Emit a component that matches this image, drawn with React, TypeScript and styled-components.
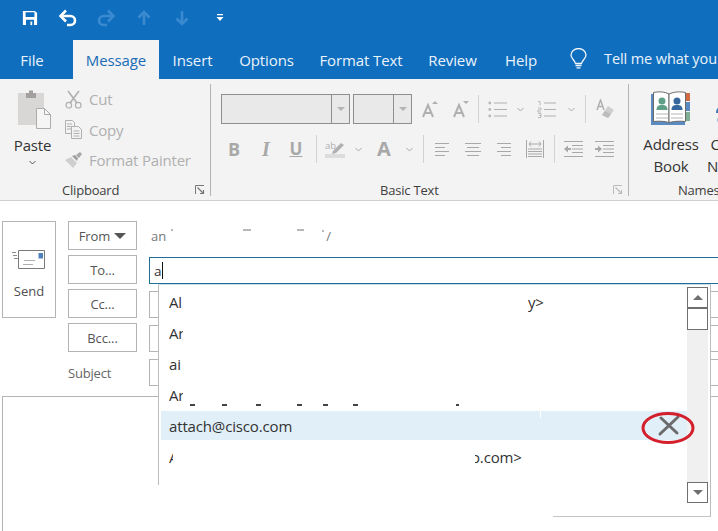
import React from "react";
import styled, { createGlobalStyle } from "styled-components";

const Global = createGlobalStyle`
  html, body { margin: 0; padding: 0; background: #fff; }
  body { font-family: "Open Sans", "Noto Sans", sans-serif; }
`;

const Win = styled.div`
  position: relative;
  width: 718px;
  height: 531px;
  overflow: hidden;
  background: #fff;
  font-size: 14px;
`;

const QuickBar = styled.div`
  display: flex;
  align-items: center;
  height: 36px;
  padding: 0 0 4px 11px;
  background: #106ebe;
`;

const QuickBtn = styled.div`
  display: flex;
  align-items: center;
  justify-content: center;
  width: 38px;
  height: 36px;
`;

const TabBar = styled.div`
  display: flex;
  height: 39px;
  background: #106ebe;
  color: #fff;
  white-space: nowrap;
  overflow: hidden;
`;

const Tab = styled.div<{ $w: number; $ml?: number; $active?: boolean }>`
  display: flex;
  align-items: center;
  justify-content: center;
  flex: none;
  width: ${(p) => p.$w}px;
  margin-left: ${(p) => p.$ml || 0}px;
  box-sizing: border-box;
  font-size: 15px;
  letter-spacing: -0.1px;
  background: ${(p) => (p.$active ? "#f3f3f3" : "transparent")};
  color: ${(p) => (p.$active ? "#1a6cb6" : "#eaf3fb")};
`;

const TellMe = styled.div`
  display: flex;
  align-items: center;
  margin-left: 18px;
  gap: 17px;
  padding-bottom: 2px;
  font-size: 14.5px;
  color: #eaf3fb;
  letter-spacing: -0.1px;
`;

const Ribbon = styled.div`
  display: flex;
  height: 121px;
  background: #f3f3f3;
  border-bottom: 1px solid #d0d0d0;
  color: #333;
  white-space: nowrap;
`;

const Group = styled.div<{ $w: number }>`
  display: flex;
  flex-direction: column;
  flex: none;
  width: ${(p) => p.$w}px;
`;

const GroupBody = styled.div`
  display: flex;
  flex: 1;
`;

const GroupDivider = styled.div`
  flex: none;
  width: 1px;
  margin: 5px 0 4px;
  background: #b4b4b4;
`;

const GroupLabel = styled.div<{ $pl: number }>`
  display: flex;
  align-items: center;
  justify-content: space-between;
  height: 20px;
  padding: 0 5px 0 ${(p) => p.$pl}px;
  font-size: 13px;
  letter-spacing: -0.2px;
  color: #404040;
`;

const Launcher = styled.svg`
  display: block;
  width: 10px;
  height: 10px;
`;

const PasteCol = styled.div`
  display: flex;
  flex-direction: column;
  align-items: center;
  width: 65px;
  padding-top: 11px;
  box-sizing: border-box;
`;

const PasteArt = styled.svg`
  flex: none;
  margin-left: 5px;
`;

const BigLabel = styled.div`
  margin-top: 6px;
  font-size: 15px;
  line-height: 20px;
  letter-spacing: -0.2px;
  text-align: center;
  color: #333;
`;

const PasteChevron = styled.div`
  display: flex;
  margin-top: 5px;
`;

const SmallCol = styled.div`
  display: flex;
  flex-direction: column;
  padding-top: 5px;
`;

const SmallRow = styled.div`
  display: flex;
  align-items: center;
  height: 30.5px;
  font-size: 15px;
  color: #b0b0b0;
  letter-spacing: -0.2px;
`;

const SmallIcon = styled.div`
  display: flex;
  width: 24px;
`;

const BasicBody = styled.div`
  display: flex;
  flex-direction: column;
  flex: 1;
  padding: 15px 0 0 10px;
`;

const ToolRow = styled.div<{ $h: number; $mt?: number }>`
  display: flex;
  align-items: center;
  height: ${(p) => p.$h}px;
  margin-top: ${(p) => p.$mt || 0}px;
  color: #a8a8a8;
`;

const Combo = styled.div<{ $w: number; $ml?: number }>`
  display: flex;
  justify-content: flex-end;
  width: ${(p) => p.$w}px;
  height: 30px;
  margin-left: ${(p) => p.$ml || 0}px;
  box-sizing: border-box;
  border: 1px solid #8e8e8e;
  background: #e9e9e9;
`;

const ComboArrow = styled.div`
  display: flex;
  align-items: center;
  justify-content: center;
  width: 17px;
  border-left: 1px solid #8e8e8e;
  &::after {
    content: "";
    border-left: 4px solid transparent;
    border-right: 4px solid transparent;
    border-top: 4px solid #b4b4b4;
  }
`;

const Slot = styled.div<{ $w: number }>`
  display: flex;
  align-items: center;
  justify-content: center;
  flex: none;
  width: ${(p) => p.$w}px;
`;

const Letter = styled.span<{ $serif?: boolean; $under?: boolean; $size?: number }>`
  font-family: ${(p) => (p.$serif ? '"Liberation Serif", serif' : '"Open Sans", sans-serif')};
  font-size: ${(p) => p.$size || 18}px;
  line-height: 22px;
  font-weight: 700;
  font-style: ${(p) => (p.$serif ? "italic" : "normal")};
  text-decoration: ${(p) => (p.$under ? "underline" : "none")};
  color: #a8a8a8;
`;

const ToolSep = styled.div<{ $ml: number }>`
  flex: none;
  width: 1px;
  height: 28px;
  margin-left: ${(p) => p.$ml}px;
  background: #d2d2d2;
`;

const NamesBody = styled.div`
  display: flex;
  padding-left: 2px;
`;

const NameCol = styled.div<{ $w: number }>`
  display: flex;
  flex-direction: column;
  align-items: center;
  flex: none;
  width: ${(p) => p.$w}px;
  padding-top: 12px;
`;

const NameIcon = styled.div`
  height: 34px;
  margin-bottom: 8px;
`;

const NameLabel = styled(BigLabel)`
  margin-top: 0;
  line-height: 22px;
`;

const Compose = styled.div`
  display: flex;
  padding: 20px 0 0 2px;
`;

const SendButton = styled.div`
  display: flex;
  flex-direction: column;
  align-items: center;
  flex: none;
  width: 54px;
  height: 97px;
  padding-top: 27px;
  box-sizing: border-box;
  border: 1px solid #b4b4b4;
  color: #505050;
  font-size: 13px;
`;

const SendLabel = styled.div`
  margin-top: 13px;
`;

const Fields = styled.div`
  display: flex;
  flex-direction: column;
  flex: 1;
  gap: 5px;
  margin-left: 12px;
`;

const FieldRow = styled.div`
  display: flex;
  align-items: flex-end;
  height: 29px;
`;

const FieldButton = styled.div`
  display: flex;
  align-items: center;
  justify-content: center;
  gap: 4px;
  flex: none;
  width: 69px;
  height: 29px;
  box-sizing: border-box;
  border: 1px solid #b4b4b4;
  font-size: 13px;
  letter-spacing: -0.1px;
  color: #555;
`;

const Caret = styled.span`
  border-left: 6px solid transparent;
  border-right: 6px solid transparent;
  border-top: 6px solid #555;
`;

const SubjectLabel = styled.div`
  display: flex;
  align-items: center;
  flex: none;
  width: 69px;
  height: 26px;
  font-size: 13px;
  letter-spacing: -0.2px;
  color: #666;
`;

const FieldInput = styled.div<{ $focus?: boolean }>`
  display: flex;
  align-items: center;
  flex: 1;
  height: 27px;
  margin-left: 12px;
  padding-left: 4px;
  box-sizing: border-box;
  border: 1px solid ${(p) => (p.$focus ? "#1d6f96" : "#b4b4b4")};
  border-right: none;
  font-size: 13.5px;
  color: #333;
`;

const TextCaret = styled.span`
  width: 1px;
  height: 17px;
  background: #111;
`;

const FromValue = styled.div`
  display: flex;
  align-items: center;
  height: 29px;
  margin-left: 14px;
  font-size: 13px;
  color: #777;
`;

const FromSlash = styled.span`
  margin-left: 2px;
`;

const Speck = styled.span<{ $ml: number; $w?: number; $up?: number; $color?: string }>`
  flex: none;
  width: ${(p) => p.$w || 3}px;
  height: 2px;
  margin-left: ${(p) => p.$ml}px;
  margin-bottom: ${(p) => p.$up || 0}px;
  background: ${(p) => p.$color || "#b8b8b8"};
`;

const Body = styled.div`
  height: 140px;
  margin: 10px 0 0 2px;
  border: 1px solid #b4b4b4;
  border-right: none;
`;

const Dropdown = styled.div`
  position: absolute;
  left: 158px;
  top: 284px;
  display: flex;
  width: 553px;
  height: 233px;
  box-sizing: border-box;
  border-top: 1px solid #c9dbe8;
  border-right: 1px solid #bdbdbd;
  background: #fff;
  &::before {
    content: "";
    position: absolute;
    left: 0;
    top: 0;
    width: 1px;
    height: 200px;
    background: #bdbdbd;
  }
  &::after {
    content: "";
    position: absolute;
    left: 395px;
    right: 0;
    bottom: 0;
    height: 1px;
    background: #c4c4c4;
  }
`;

const Rows = styled.div`
  display: flex;
  flex-direction: column;
  gap: 2px;
  flex: 1;
  padding: 2px 0 0 3px;
`;

const Row = styled.div<{ $hot?: boolean }>`
  position: relative;
  display: flex;
  align-items: center;
  height: 29px;
  padding: 1px 0 0 8px;
  box-sizing: border-box;
  font-size: 15px;
  letter-spacing: -0.15px;
  color: #333;
  white-space: nowrap;
  background: ${(p) => (p.$hot ? "#e1eff8" : "transparent")};
`;

const Name = styled.span<{ $w?: number }>`
  flex: none;
  overflow: hidden;
  width: ${(p) => (p.$w ? `${p.$w}px` : "auto")};
`;

const Tail = styled.span<{ $ml: number; $cut?: number }>`
  flex: none;
  overflow: hidden;
  margin-left: ${(p) => p.$ml}px;
  text-indent: ${(p) => -(p.$cut || 0)}px;
`;

const Notch = styled.span`
  position: absolute;
  left: 379px;
  top: 0;
  width: 1px;
  height: 7px;
  background: #fff;
`;

const RedRing = styled.svg`
  position: absolute;
  left: 480px;
  top: 0;
  width: 54px;
  height: 34px;
`;

const Scrollbar = styled.div`
  display: flex;
  flex-direction: column;
  flex: none;
  width: 21px;
  margin: 2px 2px 14px 0;
  background: #f0f0f0;
`;

const ScrollBtn = styled.div<{ $down?: boolean }>`
  display: flex;
  align-items: center;
  justify-content: center;
  height: 21px;
  margin-top: ${(p) => (p.$down ? "auto" : "0")};
  box-sizing: border-box;
  border: 1px solid #6f6f6f;
  background: #fff;
  &::after {
    content: "";
    border-left: 5px solid transparent;
    border-right: 5px solid transparent;
    ${(p) =>
      p.$down ? "border-top: 5px solid #6f6f6f;" : "border-bottom: 5px solid #6f6f6f;"}
  }
`;

const Thumb = styled.div`
  height: 22px;
  box-sizing: border-box;
  border: 1px solid #6f6f6f;
  background: #fff;
`;

const SaveIcon = () => (
  <svg width="16" height="16" viewBox="0 0 18 18">
    <path fill="#fff" d="M1 1h13.5L17 3.5V17H1z" />
    <path fill="#106ebe" d="M4 2.5h10v5.5H4zM4.5 11h9v6h-9z" />
    <path fill="#fff" d="M9.5 13h2v4h-2z" />
  </svg>
);

const UndoIcon = ({ color }: { color: string }) => (
  <svg width="20" height="18" viewBox="0 0 20 18" fill="none" stroke={color} strokeWidth="2.6">
    <path d="M3 7h9.5a4.3 4.3 0 0 1 0 9H9" />
    <path d="M8 1.5 2.5 7 8 12.5" />
  </svg>
);

const RedoIcon = () => (
  <svg width="20" height="18" viewBox="0 0 20 18" fill="none" stroke="#3a8ad0" strokeWidth="2.6">
    <path d="M17 7H7.5a4.3 4.3 0 0 0 0 9H11" />
    <path d="M12 1.5 17.5 7 12 12.5" />
  </svg>
);

const ArrowIcon = ({ down }: { down?: boolean }) => (
  <svg width="14" height="16" viewBox="0 0 14 16" fill="none" stroke="#3a8ad0" strokeWidth="2.6">
    <g transform={down ? "rotate(180 7 8)" : undefined}>
      <path d="M7 15V2" />
      <path d="M1.5 7.5 7 2l5.5 5.5" />
    </g>
  </svg>
);

const CustomizeIcon = () => (
  <svg width="8" height="8" viewBox="0 0 8 8">
    <path fill="#fff" d="M1 0h6v1.3H1zM0.5 3h7L4 7z" />
  </svg>
);

const BulbIcon = () => (
  <svg width="17" height="21" viewBox="0 0 17 21" fill="none" stroke="#f2f7fc" strokeWidth="1.3">
    <path d="M5.5 15.5C5 12 1 11 1 7a7.5 6.5 0 0 1 15 0c0 4-4 5-4.500 8.500z" />
    <path d="M5.500 17.500h6M6.500 19.800h4" />
  </svg>
);

const PasteIcon = () => (
  <PasteArt width="36" height="39" viewBox="0 0 36 39">
    <path fill="#d9d6d6" d="M1 3h26v32H1z" />
    <path fill="#a39f9f" d="M9 3h3V0.500h4V3h3v5H9z" />
    <path fill="#f6f5f5" stroke="#aeabab" d="M19.500 18.500h8l6 6v14h-14z" />
    <path fill="none" stroke="#aeabab" d="M27.500 18.500v6h6" />
  </PasteArt>
);

const ScissorsIcon = () => (
  <svg width="17" height="19" viewBox="0 0 17 19" fill="none" stroke="#b0b0b0" strokeWidth="1.6">
    <path d="M3 1l9 12M14 1L5 13" />
    <circle cx="3.800" cy="15.200" r="2.800" strokeWidth="1.2" />
    <circle cx="13.200" cy="15.200" r="2.800" strokeWidth="1.2" />
  </svg>
);

const CopyIcon = () => (
  <svg width="17" height="19" viewBox="0 0 17 19" fill="#f3f3f3" stroke="#b0b0b0">
    <path d="M.5.500h7l2 2v11h-9z" />
    <path d="M2 4h5M2 6.500h5M2 9h5" />
    <path d="M6.500 6.500h7l3 3v9h-10z" />
    <path d="M8.500 11h6M8.500 13.500h6M8.500 16h6" />
  </svg>
);

const BrushIcon = () => (
  <svg width="18" height="16" viewBox="0 0 18 16">
    <path fill="#cfcfcf" d="M0 8l6-3 6 6-4 5z" />
    <path fill="#9e9e9e" d="M7 4l3-1 3 3-1 3z" />
    <path fill="#a8a8a8" d="M11 3l4-3 2 2-3 4z" />
  </svg>
);

const GrowIcon = ({ shrink }: { shrink?: boolean }) => (
  <svg width="16" height="18" viewBox="0 0 16 18">
    <path fill="none" stroke="#b0b0b0" strokeWidth="2" d="M1 17 6 5l5 12M3 13h6" />
    <path fill="#b0b0b0" d={shrink ? "M10 1h6l-3 3z" : "M10 4h6l-3-3z"} />
  </svg>
);

const BulletIcon = () => (
  <svg width="19" height="17" viewBox="0 0 19 17" stroke="#b0b0b0">
    <circle cx="1.800" cy="2" r="1.400" fill="#b8b8b8" stroke="none" />
    <circle cx="1.800" cy="8.500" r="1.400" fill="#b8b8b8" stroke="none" />
    <circle cx="1.800" cy="15" r="1.400" fill="#b8b8b8" stroke="none" />
    <path d="M6 2h13M6 8.500h13M6 15h13" />
  </svg>
);

const NumberIcon = () => (
  <svg width="19" height="17" viewBox="0 0 19 17" stroke="#b0b0b0">
    <path d="M1 .5h2v4M1 7h3v2H1v2h3M1 12.500h3v4H1M2 14.500h2" strokeWidth=".8" fill="none" />
    <path d="M7 2h12M7 8.500h12M7 15h12" />
  </svg>
);

const Chevron = ({ color = "#a8a8a8" }: { color?: string }) => (
  <svg width="7" height="5" viewBox="0 0 7 5" fill="none" stroke={color}>
    <path d="M.5 1 3.500 4l3-3" />
  </svg>
);

const EraserIcon = () => (
  <svg width="19" height="20" viewBox="0 0 19 20">
    <path fill="none" stroke="#b0b0b0" strokeWidth="1.500" d="M1 11 4.500 1 8 11M2.500 7.500h4" />
    <path fill="#cfcfcf" d="M12 7l6 4-6 8-6-3z" />
    <path fill="#bdbdbd" d="M6 16l3-4 6 3-3 4z" />
  </svg>
);

const HighlightIcon = () => (
  <svg width="20" height="20" viewBox="0 0 20 20">
    <text x="0" y="10" fontSize="9.500" fill="#b0b0b0" fontFamily="Open Sans">ab</text>
    <path fill="#b0b0b0" d="M8 12l8-8 3 2-8 8-4 1z" />
    <path fill="#dcdcdc" d="M0 15h20v4H0z" />
  </svg>
);

const AlignIcon = ({ w, mode }: { w: number; mode: "l" | "c" | "r" }) => {
  const x = (long: number) => (mode === "l" ? 0 : mode === "c" ? (w - long) / 2 : w - long);
  const rows = [w, w - 4, w, w - 4];
  return (
    <svg width={w} height="13" viewBox={`0 0 ${w} 13`} stroke="#a8a8a8">
      {rows.map((len, i) => (
        <path key={i} d={`M${x(len)} ${i * 4 + 0.5}h${len}`} />
      ))}
    </svg>
  );
};

const JustifyIcon = () => (
  <svg width="18" height="19" viewBox="0 0 18 19" fill="none" stroke="#a8a8a8">
    <path d="M.5 0v18M17.500 0v18" />
    <path d="M3 4h12M5 1.500 3 4l2 2.500M13 1.500 15 4l-2 2.500" />
    <path d="M2 9h14M2 11.500h14M2 14h14M2 16.500h14" />
  </svg>
);

const IndentIcon = ({ out }: { out?: boolean }) => (
  <svg width="19" height="16" viewBox="0 0 19 16" fill="none" stroke="#a8a8a8">
    <path d="M0 .5h19M8 4.500h11M8 8h11M8 11.500h11M0 15.500h19" />
    <path
      fill="#a8a8a8"
      stroke="none"
      d={out ? "M0 8l4-3.500V7h3v2H4v2.500z" : "M7 8 3 4.500V7H0v2h3v2.500z"}
    />
  </svg>
);

const AddressBookIcon = () => (
  <svg width="40" height="34" viewBox="0 0 40 34">
    <path fill="#5b8ac0" d="M0 3h34v31H0z" />
    <path fill="#cf6a43" d="M35 2h4v8h-4z" />
    <path fill="#5b8ac0" d="M35 11h4v9h-4z" />
    <path fill="#7fb096" d="M35 21h4v9h-4z" />
    <path fill="#fff" stroke="#6a6a6a" d="M2.500 1.500C8 .5 13 .500 18 3v28.500c-5-1.500-10-1.500-15.500-1z" />
    <path fill="#fff" stroke="#6a6a6a" d="M34.500 1.500C29 .5 24 .500 18 3v28.500c6-1.500 11-1.500 16.500-1z" />
    <circle cx="11" cy="10" r="3.500" fill="#5f9f88" />
    <path fill="#5f9f88" d="M5.500 19c0-4 2-5 5.500-5s5.500 1 5.500 5z" />
    <circle cx="26" cy="10" r="3.500" fill="#37699f" />
    <path fill="#37699f" d="M20.500 19c0-4 2-5 5.500-5s5.500 1 5.500 5z" />
    <path stroke="#b4b4b4" d="M5 23h12M5 27h12M20 23h12M20 27h12" />
  </svg>
);

const CheckNamesIcon = () => (
  <svg width="36" height="34" viewBox="0 0 36 34">
    <circle cx="11" cy="9" r="4" fill="#3f78b5" />
    <path fill="#3f78b5" d="M3 22c0-5 3-7 8-7s8 2 8 7z" />
    <circle cx="8" cy="29" r="3.500" fill="#3f78b5" />
  </svg>
);

const LauncherGlyph = ({ color }: { color: string }) => (
  <Launcher viewBox="0 0 10 10" fill="none" stroke={color}>
    <path d="M.5 9V.5H9" />
    <path d="M2.500 2.500 8.500 8.500M8.500 5v3.500H5" strokeWidth="1.200" />
  </Launcher>
);

const EnvelopeIcon = () => (
  <svg width="34" height="20" viewBox="0 0 34 20" fill="none">
    <path stroke="#8c8c8c" d="M0 3.500h4M1 6.500h4M2 9.500h4" />
    <path fill="#fff" stroke="#7a7a7a" d="M6.500 1.500h26v18h-26z" />
    <path fill="#4f81bd" d="M26.500 4h4.500v5.500h-4.500z" />
    <path stroke="#b0b0b0" d="M12 11.500h11M11 15.500h10" />
  </svg>
);

const tabs: [string, number][] = [
  ["Insert", 67],
  ["Options", 81],
  ["Format Text", 108],
  ["Review", 75],
  ["Help", 62],
];

const dashGaps = [7, 27, 29, 36, 21, 25, 98];

const App: React.FC = () => (
  <Win>
    <Global />
    <QuickBar>
      <QuickBtn><SaveIcon /></QuickBtn>
      <QuickBtn><UndoIcon color="#fff" /></QuickBtn>
      <QuickBtn><RedoIcon /></QuickBtn>
      <QuickBtn><ArrowIcon /></QuickBtn>
      <QuickBtn><ArrowIcon down /></QuickBtn>
      <QuickBtn><CustomizeIcon /></QuickBtn>
    </QuickBar>
    <TabBar>
      <Tab $w={50} $ml={7}>File</Tab>
      <Tab $w={86} $ml={16} $active>Message</Tab>
      {tabs.map(([label, w]) => (
        <Tab key={label} $w={w}>{label}</Tab>
      ))}
      <TellMe>
        <BulbIcon />
        <span>Tell me what you want to do</span>
      </TellMe>
    </TabBar>
    <Ribbon>
      <Group $w={210}>
        <GroupBody>
          <PasteCol>
            <PasteIcon />
            <BigLabel>Paste</BigLabel>
            <PasteChevron><Chevron color="#555" /></PasteChevron>
          </PasteCol>
          <SmallCol>
            <SmallRow><SmallIcon><ScissorsIcon /></SmallIcon>Cut</SmallRow>
            <SmallRow><SmallIcon><CopyIcon /></SmallIcon>Copy</SmallRow>
            <SmallRow><SmallIcon><BrushIcon /></SmallIcon>Format Painter</SmallRow>
          </SmallCol>
        </GroupBody>
        <GroupLabel $pl={62}>Clipboard<LauncherGlyph color="#777" /></GroupLabel>
      </Group>
      <GroupDivider />
      <Group $w={417}>
        <BasicBody>
          <ToolRow $h={30}>
            <Combo $w={129}><ComboArrow /></Combo>
            <Combo $w={59} $ml={3}><ComboArrow /></Combo>
            <Slot $w={36}><GrowIcon /></Slot>
            <Slot $w={25}><GrowIcon shrink /></Slot>
            <ToolSep $ml={5} />
            <Slot $w={36}><BulletIcon /></Slot>
            <Slot $w={10}><Chevron /></Slot>
            <Slot $w={43}><NumberIcon /></Slot>
            <Slot $w={7}><Chevron /></Slot>
            <ToolSep $ml={10} />
            <Slot $w={38}><EraserIcon /></Slot>
          </ToolRow>
          <ToolRow $h={26} $mt={12}>
            <Slot $w={26}><Letter>B</Letter></Slot>
            <Slot $w={38}><Letter $serif $size={20}>I</Letter></Slot>
            <Slot $w={22}><Letter $under $size={17}>U</Letter></Slot>
            <ToolSep $ml={9} />
            <Slot $w={36}><HighlightIcon /></Slot>
            <Slot $w={10}><Chevron /></Slot>
            <Slot $w={42}><Letter $size={20}>A</Letter></Slot>
            <Slot $w={8}><Chevron /></Slot>
            <ToolSep $ml={10} />
            <Slot $w={36}><AlignIcon w={14} mode="l" /></Slot>
            <Slot $w={26}><AlignIcon w={16} mode="c" /></Slot>
            <Slot $w={36}><AlignIcon w={14} mode="r" /></Slot>
            <Slot $w={26}><JustifyIcon /></Slot>
            <ToolSep $ml={6} />
            <Slot $w={36}><IndentIcon out /></Slot>
            <Slot $w={26}><IndentIcon /></Slot>
          </ToolRow>
        </BasicBody>
        <GroupLabel $pl={169}>Basic Text<LauncherGlyph color="#bcbcbc" /></GroupLabel>
      </Group>
      <GroupDivider />
      <Group $w={120}>
        <GroupBody>
          <NamesBody>
            <NameCol $w={80}>
              <NameIcon><AddressBookIcon /></NameIcon>
              <NameLabel>Address<br />Book</NameLabel>
            </NameCol>
            <NameCol $w={40}>
              <NameIcon><CheckNamesIcon /></NameIcon>
              <NameLabel>Check<br />Names</NameLabel>
            </NameCol>
          </NamesBody>
        </GroupBody>
        <GroupLabel $pl={49}>Names</GroupLabel>
      </Group>
    </Ribbon>
    <Compose>
      <SendButton>
        <EnvelopeIcon />
        <SendLabel>Send</SendLabel>
      </SendButton>
      <Fields>
        <FieldRow>
          <FieldButton>From<Caret /></FieldButton>
          <FromValue>
            an
            <Speck $ml={5} $w={2} $up={12} />
            <Speck $ml={70} $w={8} $up={12} />
            <Speck $ml={46} $w={7} $up={12} />
            <Speck $ml={18} $w={2} $up={10} />
            <FromSlash>/</FromSlash>
          </FromValue>
        </FieldRow>
        <FieldRow>
          <FieldButton>To...</FieldButton>
          <FieldInput $focus>a<TextCaret /></FieldInput>
        </FieldRow>
        <FieldRow>
          <FieldButton>Cc...</FieldButton>
          <FieldInput />
        </FieldRow>
        <FieldRow>
          <FieldButton>Bcc...</FieldButton>
          <FieldInput />
        </FieldRow>
        <FieldRow>
          <SubjectLabel>Subject</SubjectLabel>
          <FieldInput />
        </FieldRow>
      </Fields>
    </Compose>
    <Body />
    <Dropdown>
      <Rows>
        <Row><Name $w={14}>Al</Name><Tail $ml={345}>y&gt;</Tail></Row>
        <Row><Name $w={14}>Ar</Name></Row>
        <Row><Name $w={12}>ai</Name></Row>
        <Row>
          <Name $w={14}>Ar</Name>
          {dashGaps.map((gap, i) => (
            <Speck key={i} $ml={gap} $w={i === 6 ? 3 : 5} $up={-19} $color="#444" />
          ))}
        </Row>
        <Row $hot>
          attach@cisco.com
          <Notch />
          <RedRing viewBox="0 0 54 34" fill="none">
            <path stroke="#6b6b6b" strokeWidth="3" strokeLinecap="round" d="M20 7l16 15M37 6 19 23" />
            <ellipse cx="27" cy="17" rx="25" ry="14.500" stroke="#d3202c" strokeWidth="3" />
          </RedRing>
        </Row>
        <Row><Name $w={4}>A</Name><Tail $ml={302} $cut={4}>o.com&gt;</Tail></Row>
      </Rows>
      <Scrollbar>
        <ScrollBtn />
        <Thumb />
        <ScrollBtn $down />
      </Scrollbar>
    </Dropdown>
  </Win>
);

export default App;
